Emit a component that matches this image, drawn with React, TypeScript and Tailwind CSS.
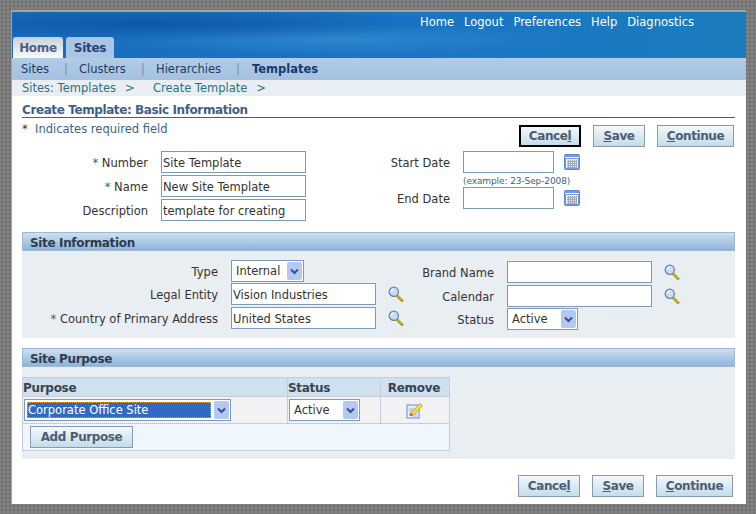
import React from 'react';

const Calendar = () => (
  <svg width="16" height="16" viewBox="0 0 16 16" className="shrink-0">
    <rect x="0.5" y="0.5" width="15" height="15" rx="1" fill="#6f9be0" stroke="#5c88d4" />
    <rect x="1" y="3" width="14" height="1" fill="#ffffff" />
    <rect x="2" y="5" width="12" height="9" fill="#eceff5" />
    <path d="M3 7.5h10M3 9.5h10M3 11.5h10M3 13.5h10M4.5 6v8M6.5 6v8M8.5 6v8M10.5 6v8M12.5 6v8" stroke="#a4a9b2" strokeWidth="1" />
  </svg>
);

const Search = () => (
  <svg width="16" height="16" viewBox="0 0 16 16" className="shrink-0">
    <path d="M9 9.5l5 5" stroke="#b39a1c" strokeWidth="3" strokeLinecap="round" />
    <path d="M9.5 9l5 5" stroke="#e2cf4a" strokeWidth="1" />
    <circle cx="5.8" cy="5.8" r="4.6" fill="#c7dbf5" stroke="#6d83a8" strokeWidth="1.3" />
    <path d="M3.2 5.5a2.8 2.8 0 0 1 2.4-2.4" stroke="#ffffff" strokeWidth="1.2" fill="none" />
  </svg>
);

const Edit = () => (
  <svg width="18" height="18" viewBox="0 0 18 18">
    <rect x="1" y="4" width="12" height="13" fill="#e6effb" stroke="#5f8fdc" />
    <path d="M3 8h6M3 10h5M7 13h4M7 15h4" stroke="#9db4d6" />
    <path d="M4.5 12.5L14 2.5l2.5 2.5-9.5 9.5z" fill="#f3e23c" stroke="#b59a1a" strokeWidth="0.8" />
    <circle cx="5" cy="13.5" r="1.6" fill="#e2553d" />
  </svg>
);

const Chevron = () => (
  <span className="flex h-[18px] w-[15px] shrink-0 items-center justify-center rounded-[2px] bg-[#b4c8f5]">
    <svg width="9" height="7" viewBox="0 0 9 7">
      <path d="M1 1.5l3.5 3.5L8 1.5" stroke="#39507c" strokeWidth="2" fill="none" />
    </svg>
  </span>
);

const TextInput = ({ value = '', w, className = '' }: { value?: string; w: string; className?: string }) => (
  <div className={`flex h-[22px] items-center overflow-hidden border border-[#7d9ab8] bg-white pl-[1px] pt-[3px] text-[#333333] ${w} ${className}`}>
    {value}
  </div>
);

const Select = ({ value, w }: { value: string; w: string }) => (
  <div className={`flex h-[22px] items-center justify-between border border-[#7d9ab8] bg-white pl-[4px] pr-[1px] text-[#333333] ${w}`}>
    <span className="pt-[2px]">{value}</span>
    <Chevron />
  </div>
);

const Btn = ({ hot, rest, first = false, w, focus = false }: { hot?: string; rest: string; first?: boolean; w: string; focus?: boolean }) => (
  <button
    className={`flex h-[22px] items-center justify-center bg-gradient-to-b from-[#f4f8fb] to-[#c3dde9] text-[12px] font-bold tracking-[-0.4px] text-[#4d5c74] ${w} ${
      focus ? 'border-2 border-black' : 'border border-[#8a9bb0]'
    }`}
  >
    {first && hot && <span className="underline">{hot}</span>}
    {rest}
    {!first && hot && <span className="underline">{hot}</span>}
  </button>
);

const Field = ({ label, req, w, mb = '', children }: { label: string; req?: boolean; w: string; mb?: string; children: React.ReactNode }) => (
  <div className={`flex items-center ${mb}`}>
    <div className={`shrink-0 pr-[13px] pt-[3px] text-right text-[#333333] ${w}`}>
      {req && <span className="text-[#3d5f8c]">* </span>}
      {label}
    </div>
    {children}
  </div>
);

const SectionHead = ({ title }: { title: string }) => (
  <div className="flex h-[19px] items-center border border-[#9db8d6] bg-gradient-to-b from-[#cfe0f1] to-[#8db4d9] pl-[7px] pt-[2px] text-[12px] font-bold tracking-[-0.35px] text-[#2e3b4e]">
    {title}
  </div>
);

export default function App() {
  return (
    <div
      className="h-[514px] w-[756px] overflow-hidden bg-[#808080] bg-[radial-gradient(#6c6c6c_1px,transparent_1px)] bg-[length:4px_4px] pl-[11px] pt-[10px] text-[11.5px]"
      style={{ fontFamily: '"DejaVu Sans", sans-serif' }}
    >
      <div className="flex h-[494px] w-[735px] flex-col border-l border-t-2 border-[#a8a596] bg-white">
        {/* top banner */}
        <div className="flex h-[46px] flex-col justify-between bg-[radial-gradient(ellipse_at_18%_25%,#0f58a8,transparent_35%),radial-gradient(ellipse_at_45%_60%,#2f86cc,transparent_40%),linear-gradient(90deg,#1b6cbc,#1a74c4_55%,#1a7dbd)]">
          <div className="flex justify-end gap-[10px] pr-[52px] pt-[2px] text-white">
            <span>Home</span>
            <span>Logout</span>
            <span>Preferences</span>
            <span>Help</span>
            <span>Diagnostics</span>
          </div>
          <div className="flex gap-[3px] pl-[1px] text-[12px] font-bold tracking-[-0.3px]">
            <div className="flex h-[21px] w-[50px] items-center justify-center rounded-t-[3px] bg-gradient-to-b from-[#c9d1da] to-[#f8f9fb] pt-[1px] text-[#50617a]">Home</div>
            <div className="flex h-[21px] w-[48px] items-center justify-center rounded-t-[3px] bg-[#a9c6e4] pt-[1px] text-[#24437c]">Sites</div>
          </div>
        </div>

        {/* sub nav */}
        <div className="flex h-[22px] items-center bg-gradient-to-b from-[#b2cbe6] to-[#a4c1df] pl-[9px] pt-[2px] text-[#1e3c68]">
          <span className="w-[43px]">Sites</span>
          <span className="w-[15px] text-[#7b8ea8]">|</span>
          <span className="w-[62px]">Clusters</span>
          <span className="w-[15px] text-[#7b8ea8]">|</span>
          <span className="w-[80px]">Hierarchies</span>
          <span className="w-[16px] text-[#7b8ea8]">|</span>
          <span className="font-bold text-[#123a6d]">Templates</span>
        </div>

        {/* breadcrumb */}
        <div className="flex h-[16px] items-center bg-[#e9eef3] pl-[10px] pt-[1px] text-[#2b7383]">
          <span className="w-[131px]">Sites: Templates<span className="ml-[9px]">&gt;</span></span>
          <span>Create Template<span className="ml-[9px]">&gt;</span></span>
        </div>

        <div className="flex flex-1 flex-col pl-[10px] pr-[11px]">
          <div className="mt-[6px] h-[16px] border-b border-[#3d5f8c] text-[12px] font-bold leading-[16px] tracking-[-0.4px] text-[#3d5f8c]">
            Create Template: Basic Information
          </div>

          <div className="flex h-[30px] items-start justify-between">
            <div className="mt-[3px] text-[#3d5f8c]"><span className="text-[#333333]">*</span>&nbsp; Indicates required field</div>
            <div className="mr-[1px] mt-[7px] flex gap-[12px]">
              <Btn hot="l" rest="Cance" w="w-[62px]" focus />
              <Btn hot="S" rest="ave" first w="w-[52px]" />
              <Btn hot="C" rest="ontinue" first w="w-[77px]" />
            </div>
          </div>

          {/* basic fields */}
          <div className="flex h-[84px] pt-[3px]">
            <div className="flex w-[284px] flex-col gap-[2px]">
              <Field label="Number" req w="w-[139px]"><TextInput value="Site Template" w="w-[145px]" /></Field>
              <Field label="Name" req w="w-[139px]"><TextInput value="New Site Template" w="w-[145px]" /></Field>
              <Field label="Description" w="w-[139px]"><TextInput value="template for creating" w="w-[145px]" /></Field>
            </div>
            <div className="flex flex-col">
              <Field label="Start Date" w="w-[157px]">
                <TextInput w="w-[91px]" className="mr-[10px]" />
                <Calendar />
              </Field>
              <div className="ml-[157px] h-[14px] pt-[1px] text-[9px] leading-[14px] tracking-[-0.1px] text-[#3d5f8c]">(example: 23-Sep-2008)</div>
              <Field label="End Date" w="w-[157px]">
                <TextInput w="w-[91px]" className="mr-[10px]" />
                <Calendar />
              </Field>
            </div>
          </div>

          {/* site information */}
          <SectionHead title="Site Information" />
          <div className="flex h-[87px] bg-[#e9eef3] pt-[9px]">
            <div className="flex w-[385px] flex-col">
              <Field label="Type" w="w-[209px]" mb="mb-[1px]"><Select value="Internal" w="w-[73px]" /></Field>
              <Field label="Legal Entity" w="w-[209px]" mb="mb-[2px]">
                <TextInput value="Vision Industries" w="w-[145px]" className="mr-[12px]" />
                <Search />
              </Field>
              <Field label="Country of Primary Address" req w="w-[209px]">
                <TextInput value="United States" w="w-[145px]" className="mr-[12px]" />
                <Search />
              </Field>
            </div>
            <div className="mt-[1px] flex flex-col">
              <Field label="Brand Name" w="w-[100px]" mb="mb-[2px]">
                <TextInput w="w-[145px]" className="mr-[12px]" />
                <Search />
              </Field>
              <Field label="Calendar" w="w-[100px]" mb="mb-[1px]">
                <TextInput w="w-[145px]" className="mr-[12px]" />
                <Search />
              </Field>
              <Field label="Status" w="w-[100px]"><Select value="Active" w="w-[71px]" /></Field>
            </div>
          </div>

          {/* site purpose */}
          <div className="mt-[10px]"><SectionHead title="Site Purpose" /></div>
          <div className="h-[92px] bg-[#e9eef3] pt-[10px]">
            <table className="w-[428px] table-fixed border-collapse border border-[#c8ccd6] text-[#333333]">
              <thead>
                <tr className="h-[19px] bg-[#cfe0f0] text-left text-[12px] leading-[16px] tracking-[-0.3px] text-[#3a4350]">
                  <th className="w-[265px] border border-[#c8ccd6] pt-[2px] font-bold">Purpose</th>
                  <th className="w-[93px] border border-[#c8ccd6] pt-[2px] font-bold">Status</th>
                  <th className="border border-[#c8ccd6] pr-[2px] pt-[2px] text-center font-bold">Remove</th>
                </tr>
              </thead>
              <tbody>
                <tr className="h-[27px] bg-[#f2f2f4]">
                  <td className="border border-[#c8ccd6] pl-[1px]">
                    <div className="flex h-[22px] w-[207px] items-center justify-between border border-[#7d9ab8] bg-white pl-[2px] pr-[1px]">
                      <span className="flex h-[16px] w-[184px] items-center border border-dotted border-[#e8a63a] bg-[#316ac5] pt-[1px] text-white">Corporate Office Site</span>
                      <Chevron />
                    </div>
                  </td>
                  <td className="border border-[#c8ccd6] pl-[1px]"><Select value="Active" w="w-[71px]" /></td>
                  <td className="border border-[#c8ccd6]"><div className="flex justify-center"><Edit /></div></td>
                </tr>
                <tr className="h-[27px] bg-[#f0f6fd]">
                  <td colSpan={3} className="border border-[#c8ccd6] pl-[7px]">
                    <Btn rest="Add Purpose" w="w-[103px]" />
                  </td>
                </tr>
              </tbody>
            </table>
          </div>

          {/* bottom buttons */}
          <div className="mr-[2px] mt-[16px] flex justify-end gap-[12px]">
            <Btn hot="l" rest="Cance" w="w-[62px]" />
            <Btn hot="S" rest="ave" first w="w-[52px]" />
            <Btn hot="C" rest="ontinue" first w="w-[77px]" />
          </div>
        </div>
      </div>
    </div>
  );
}
